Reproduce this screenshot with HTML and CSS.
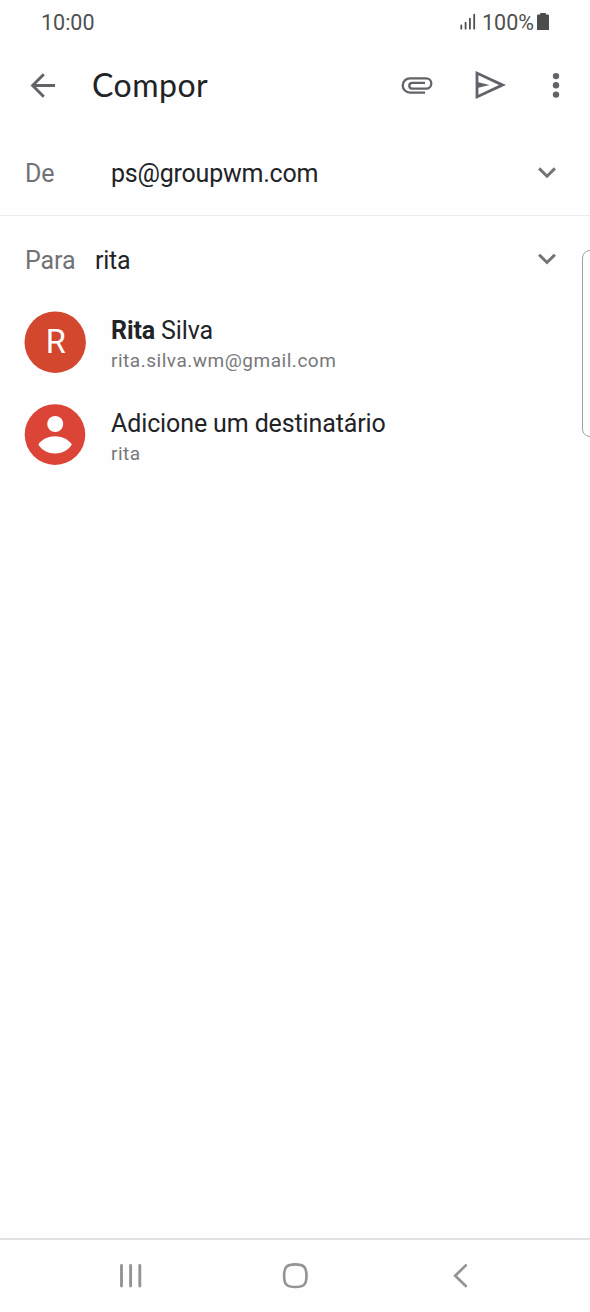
FILE: index.html
```html
<!DOCTYPE html>
<html lang="pt">
<head>
<meta charset="utf-8">
<title>Compor</title>
<link rel="stylesheet" href="styles.css">
</head>
<body>
<div class="screen">
  <header class="status">
    <span class="clock">10:00</span>
    <svg class="signal" width="16" height="18" viewBox="0 0 16 18"><path d="M1.3 12.5v3.2M5.6 9.7v6M9.9 5.6v10.1M14.2 1.6v14.1" stroke="#505050" stroke-width="1.8" stroke-linecap="round"/></svg>
    <span class="percent">100%</span>
    <svg class="battery" width="12" height="18" viewBox="0 0 12 18"><path d="M3.2 0h5.6v1.6H11q1 0 1 1V17H0V2.6q0-1 1-1h2.2z" fill="#4c4c4c"/></svg>
  </header>
  <div class="appbar">
    <svg class="back" width="26" height="26" viewBox="0 0 26 26"><path d="M25 13.5H3.2M13.8 2.2 2.6 13.5l11.2 11.3" fill="none" stroke="#626368" stroke-width="2.9"/></svg>
    <h1 class="title">Compor</h1>
    <svg class="clip" width="32" height="18" viewBox="0 0 32 18"><path d="M24 16.6H8.9A7.1 7.1 0 0 1 8.9 2.3H25.1A5.2 5.2 0 0 1 25.1 12.7H11.2A2.9 2.9 0 0 1 11.2 6.9H24" fill="none" stroke="#626368" stroke-width="2.3"/></svg>
    <svg class="send" width="31" height="29" viewBox="0 0 31 29"><path fill-rule="evenodd" d="M.6 0 31 14 .6 28ZM3.4 4.2V11.3L14.6 14 3.4 16.7V23.8L24 14Z" fill="#626368"/></svg>
    <svg class="more" width="8" height="26" viewBox="0 0 8 26"><g fill="#626368"><circle cx="4" cy="4.1" r="3.2"/><circle cx="4" cy="13.3" r="3.2"/><circle cx="4" cy="22.6" r="3.2"/></g></svg>
  </div>
  <div class="field from">
    <span class="label">De</span>
    <span class="value address">ps@groupwm.com</span>
    <svg class="chevron" width="18" height="12" viewBox="0 0 18 12"><path d="m1.1 1.4 7.9 7.8 7.9-7.8" fill="none" stroke="#747474" stroke-width="3"/></svg>
  </div>
  <div class="field to">
    <span class="label">Para</span>
    <span class="value query">rita</span>
    <svg class="chevron" width="18" height="12" viewBox="0 0 18 12"><path d="m1.1 1.7 7.9 7.8 7.9-7.8" fill="none" stroke="#747474" stroke-width="3"/></svg>
  </div>
  <main class="suggestions">
    <div class="contact">
      <svg class="avatar" width="62" height="62" viewBox="0 0 62 62"><circle cx="31.2" cy="31.2" r="30.7" fill="#d2472d"/><text class="initial" x="31.7" y="42.2" text-anchor="middle">R</text></svg>
      <div class="details">
        <div class="name silva"><b>Rita</b> Silva</div>
        <div class="mail">rita.silva.wm@gmail.com</div>
      </div>
    </div>
    <div class="contact">
      <svg class="avatar" width="62" height="62" viewBox="0 0 62 62"><circle cx="31" cy="30.6" r="30.3" fill="#db4437"/><circle cx="31.2" cy="20" r="8" fill="#fff"/><path d="M14.3 40.5C21.5 29.5 40.5 29.5 47.9 40.5 40.5 52.5 21.5 52.5 14.3 40.5Z" fill="#fff"/></svg>
      <div class="details">
        <div class="name">Adicione um destinatário</div>
        <div class="mail">rita</div>
      </div>
    </div>
  </main>
  <nav class="navbar">
    <svg class="recents" width="24" height="24" viewBox="0 0 24 24"><path d="M2.5 1.5v20.5M11.6 1.5v20.5M20.8 1.5v20.5" stroke="#949494" stroke-width="2.9" stroke-linecap="round"/></svg>
    <svg class="home" width="26" height="26" viewBox="0 0 26 26"><path d="M13.3 1.4c8.6 0 11.2 2.6 11.2 11.3S21.9 24 13.3 24 2.1 21.4 2.1 12.7 4.7 1.4 13.3 1.4Z" fill="none" stroke="#949494" stroke-width="2.6"/></svg>
    <svg class="prev" width="15" height="24" viewBox="0 0 15 24"><path d="M12.8 1.4 2.2 11.7l10.6 10.3" fill="none" stroke="#949494" stroke-width="2.7" stroke-linecap="round"/></svg>
  </nav>
  <div class="edge-handle"></div>
</div>
</body>
</html>
```
FILE: styles.css
```css
* { box-sizing: border-box; }
body { margin: 0; background: #fefefe; font-family: Roboto, sans-serif; color: #222326; }
svg { display: block; flex: none; }
.screen { position: relative; width: 590px; height: 1312px; overflow: hidden; display: flex; flex-direction: column; }
.status { height: 44px; flex: none; display: flex; align-items: center; padding: 0 41px; font-size: 21.5px; line-height: 42px; color: #505050; }
.clock { margin-right: auto; padding-top: 2px; }
.signal { margin-right: 6px; }
.percent { margin-right: 3px; padding-top: 2px; }
.appbar { height: 85px; flex: none; display: flex; align-items: center; padding: 0 30px 3px; }
.title { margin: 0 auto 0 36px; font: 400 32px/40px Lato, sans-serif; letter-spacing: 0.5px; }
.clip { margin-right: 42px; }
.send { margin-right: 46px; }
.field { height: 87px; flex: none; display: flex; align-items: center; padding: 0 34px 0 25px; font-size: 25px; line-height: 30px; }
.from { border-bottom: 1px solid #ebebeb; padding-top: 2px; }
.label { color: #717276; letter-spacing: -0.1px; }
.from .label { width: 86px; }
.to .label { width: 70px; }
.value { letter-spacing: -0.22px; }
.label, .value { padding-top: 2px; }
.chevron { margin-left: auto; }
.to .chevron { margin-bottom: 1px; }
.suggestions { flex: 1; padding: 8px 24px; }
.contact { height: 62px; margin-bottom: 31px; display: flex; align-items: center; }
.avatar { margin-right: 25px; }
.initial { fill: #fff; font: 400 32.5px Roboto, sans-serif; }
.details { padding-top: 5px; }
.name { font-size: 25px; line-height: 30px; letter-spacing: -0.12px; }
.mail { font-size: 19px; line-height: 24px; margin-top: 3px; color: #77787b; letter-spacing: 0.52px; }
.navbar { height: 74px; flex: none; display: flex; align-items: center; padding: 0 122px 0 119px; border-top: 2px solid #e2e2e2; }
.home { margin-left: 139px; }
.prev { margin-left: auto; }
.edge-handle { position: absolute; left: 582px; top: 250px; width: 16px; height: 187px; border: 1.5px solid #a2a2a2; border-radius: 8px; background: #fefefe; }
```
